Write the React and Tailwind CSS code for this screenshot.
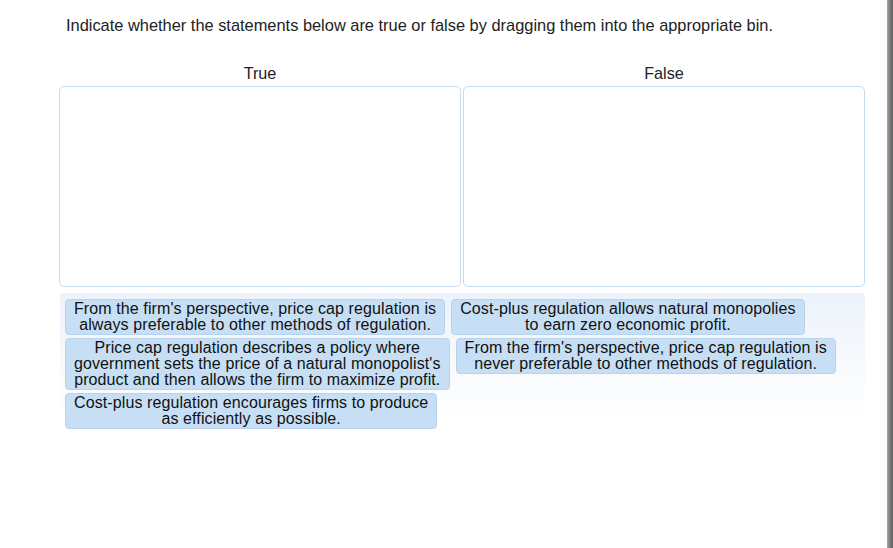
import React from "react";

const trueBinTokens = [];
const falseBinTokens = [];

const pool = [
  ["From the firm's perspective, price cap regulation is", "always preferable to other methods of regulation."],
  ["Cost-plus regulation allows natural monopolies", "to earn zero economic profit."],
  ["Price cap regulation describes a policy where", "government sets the price of a natural monopolist's", "product and then allows the firm to maximize profit."],
  ["From the firm's perspective, price cap regulation is", "never preferable to other methods of regulation."],
  ["Cost-plus regulation encourages firms to produce", "as efficiently as possible."],
];

function Token({ lines }) {
  return (
    <div className="rounded-[4px] border border-[#b9d3ee] bg-[#c7dff4] px-[8px] py-[1px] text-center text-[16px] tracking-[0.1px] leading-[16px] whitespace-nowrap text-[#111]">
      {lines.map((l, i) => (
        <div key={i}>{l}</div>
      ))}
    </div>
  );
}

function Bin({ label, items }) {
  return (
    <div className="flex flex-col">
      <div className="h-[26px] pt-[3px] text-center text-[16.2px] leading-[20px] text-[#222]">{label}</div>
      <div className="h-[201px] rounded-[5px] border border-[#c4dcf3] bg-white">
        {items.map((t, i) => (
          <Token key={i} lines={t} />
        ))}
      </div>
    </div>
  );
}

export default function App() {
  return (
    <div className="flex h-[548px] w-[893px] bg-white" style={{ fontFamily: '"Liberation Sans", Arial, sans-serif' }}>
      <div className="flex-1 pl-[59px] pr-[22px]">
        <p className="pt-[15px] pl-[7px] text-[16.4px] leading-[20px] text-[#222]">
          Indicate whether the statements below are true or false by dragging them into the appropriate bin.
        </p>
        <div className="mt-[25px] grid grid-cols-2 gap-[2px]">
          <Bin label="True" items={trueBinTokens} />
          <Bin label="False" items={falseBinTokens} />
        </div>
        <div className="mt-[6px] ml-[1px] h-[128px] rounded-[4px] bg-gradient-to-b from-[#edf3fb] to-white px-[5px] pt-[6px]">
          <div className="flex flex-wrap content-start items-start gap-x-[6px] gap-y-[3px]">
            {pool.map((t, i) => (
              <Token key={i} lines={t} />
            ))}
          </div>
        </div>
      </div>
      <div className="w-[6px] bg-gradient-to-r from-[#a8a8a8] via-[#7a7a7a] to-[#646464]" />
    </div>
  );
}
